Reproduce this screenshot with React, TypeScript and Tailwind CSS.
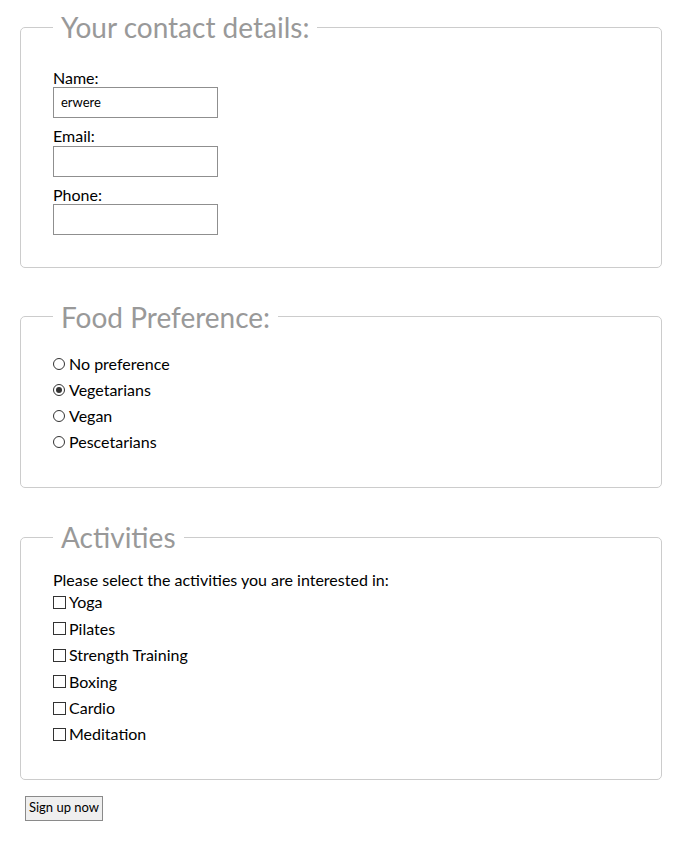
import React from "react";

const font = { fontFamily: "Lato, 'Liberation Sans', sans-serif" };

function Legend({ children }: { children: React.ReactNode }) {
  return (
    <legend className="px-2 text-[28px] leading-[34px] text-[#999999] font-normal">
      {children}
    </legend>
  );
}

function Field({ label, value }: { label: string; value?: string }) {
  return (
    <div className="flex flex-col">
      <label className="text-[16px] leading-[19.3px] text-black">{label}</label>
      <div className="w-[165px] h-[31px] border border-[#8f8f8f] bg-white flex items-center pl-[7px] text-[13px] text-black">
        {value}
      </div>
    </div>
  );
}

function Radio({ label, checked }: { label: string; checked?: boolean }) {
  return (
    <div className="h-[26.3px] flex items-center">
      <span className="w-[12px] h-[12px] rounded-full border border-[#333] flex items-center justify-center mr-[4px]">
        {checked && <span className="w-[6px] h-[6px] rounded-full bg-[#333]" />}
      </span>
      <span className="text-[16px] text-black">{label}</span>
    </div>
  );
}

function Check({ label }: { label: string }) {
  return (
    <div className="h-[26.4px] flex items-center">
      <span className="w-[13px] h-[13px] border border-[#333] mr-[3px]" />
      <span className="text-[16px] text-black">{label}</span>
    </div>
  );
}

export default function App() {
  return (
    <div style={font} className="bg-white min-h-[842px] pt-[10px] text-black">
      <fieldset className="ml-[20px] w-[642px] border border-[#cccccc] rounded-[5px] pl-[32px] pt-[24px] pb-[32px]">
        <Legend>Your contact details:</Legend>
        <div className="flex flex-col gap-[8px]">
          <Field label="Name:" value="erwere" />
          <Field label="Email:" />
          <Field label="Phone:" />
        </div>
      </fieldset>

      <fieldset className="mt-[32px] ml-[20px] w-[642px] border border-[#cccccc] rounded-[5px] pl-[32px] pt-[16.5px] pb-[31.5px]">
        <Legend>Food Preference:</Legend>
        <Radio label="No preference" />
        <Radio label="Vegetarians" checked />
        <Radio label="Vegan" />
        <Radio label="Pescetarians" />
      </fieldset>

      <fieldset className="mt-[32px] ml-[20px] w-[642px] border border-[#cccccc] rounded-[5px] pl-[32px] pt-[16px] pb-[31px]">
        <Legend>Activities</Legend>
        <div className="text-[16px] leading-[19.2px]">Please select the activities you are interested in:</div>
        <Check label="Yoga" />
        <Check label="Pilates" />
        <Check label="Strength Training" />
        <Check label="Boxing" />
        <Check label="Cardio" />
        <Check label="Meditation" />
      </fieldset>

      <button className="mt-[16px] ml-[25px] w-[78px] h-[25px] border border-[#8a8a8a] bg-[#efefef] text-[13px] text-black flex items-center justify-center">
        Sign up now
      </button>
    </div>
  );
}
